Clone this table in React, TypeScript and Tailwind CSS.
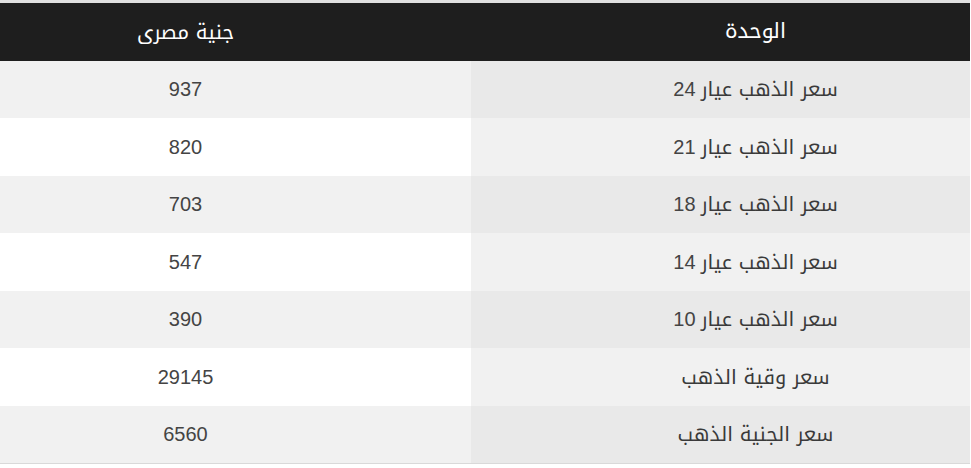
const rows = [
  { unit: 'سعر الذهب عيار', num: '24', price: '937' },
  { unit: 'سعر الذهب عيار', num: '21', price: '820' },
  { unit: 'سعر الذهب عيار', num: '18', price: '703' },
  { unit: 'سعر الذهب عيار', num: '14', price: '547' },
  { unit: 'سعر الذهب عيار', num: '10', price: '390' },
  { unit: 'سعر وقية الذهب', num: '', price: '29145' },
  { unit: 'سعر الجنية الذهب', num: '', price: '6560' },
];

const arabic = { fontFamily: '"Noto Kufi Arabic", "Noto Sans Arabic", "Noto Sans Arabic UI", "DejaVu Sans", sans-serif' };

export default function App() {
  return (
    <div className="min-h-screen bg-white" style={{ fontFamily: '"Liberation Sans", Arial, sans-serif' }}>
      <table dir="rtl" className="w-[970px] border-collapse border-t-[3px] border-t-[#e0e0e0] border-b border-b-[#d9d9d9] text-[20px]">
        <thead>
          <tr className="h-[59px] bg-[#1e1e1e] text-white">
            <th className="w-[499px] pl-[70px] text-center text-[21px] font-normal" style={arabic}>الوحدة</th>
            <th className="w-[471px] pr-[100px] text-center text-[20px] font-normal" style={arabic}>جنية مصرى</th>
          </tr>
        </thead>
        <tbody className="text-[#444444]">
          {rows.map((r, i) => (
            <tr key={r.unit + r.num} className="h-[57.5px]">
              <td className={`pl-[70px] text-center text-[#3a3a3a] ${i % 2 === 0 ? 'bg-[#e9e9e9]' : 'bg-[#f1f1f1]'}`}>
                <span className="text-[20px]" style={arabic}>{r.unit}</span>
                {r.num && <span className="text-[#444444]"> {r.num}</span>}
              </td>
              <td className={`pr-[100px] text-center ${i % 2 === 0 ? 'bg-[#f1f1f1]' : 'bg-white'}`}>{r.price}</td>
            </tr>
          ))}
        </tbody>
      </table>
    </div>
  );
}
